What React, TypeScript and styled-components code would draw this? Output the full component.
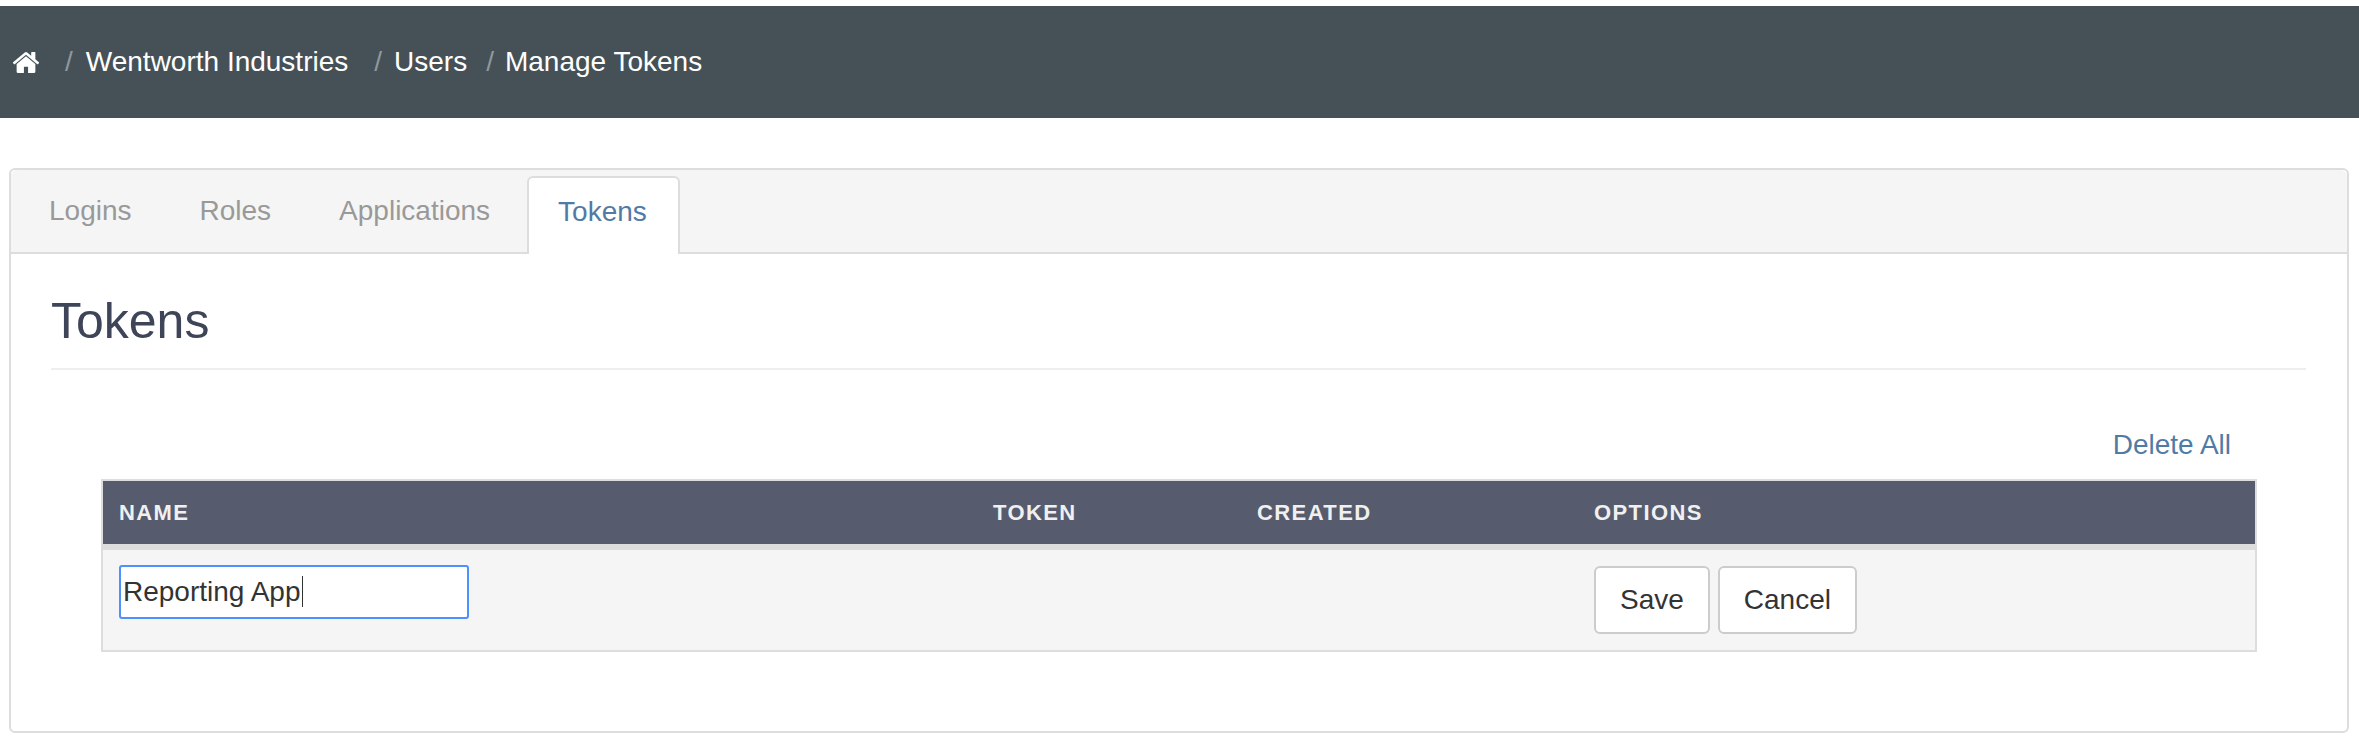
import React from 'react';
import styled, { createGlobalStyle } from 'styled-components';

const GlobalStyle = createGlobalStyle`
html, body {
  margin: 0;
  padding: 0;
  background: #fff;
  font-family: "Liberation Sans", Arial, sans-serif;
}
* { box-sizing: border-box; }
`;

const Page = styled.div`
  width: 2359px;
  height: 743px;
  padding-top: 6px;
  overflow: hidden;
`;

const Header = styled.nav`
  height: 112px;
  background: #455157;
  display: flex;
  align-items: center;
  padding-left: 13px;
  color: #fff;
  font-size: 28px;
`;

const Crumb = styled.span<{ $gap?: number }>`
  color: #fff;
  margin-right: ${(p) => p.$gap ?? 0}px;
`;

const Sep = styled.span<{ $gap: number }>`
  color: #8f989c;
  margin-right: ${(p) => p.$gap}px;
`;

const HomeIcon = styled.svg`
  width: 26px;
  height: 21px;
  fill: #fff;
  margin-right: 26px;
`;

const Card = styled.section`
  margin: 50px 10px 0 9px;
  height: 565px;
  border: 2px solid #ddd;
  border-radius: 6px;
`;

const TabBar = styled.ul`
  list-style: none;
  margin: 0;
  height: 84px;
  padding: 6px 0 0 4px;
  display: flex;
  background: #f5f5f5;
  border-bottom: 2px solid #ddd;
  border-radius: 6px 6px 0 0;
`;

const Tab = styled.li<{ $active?: boolean }>`
  height: 78px;
  padding: 0 34px 8px;
  display: flex;
  align-items: center;
  font-size: 28px;
  color: ${(p) => (p.$active ? '#4f7ba6' : '#999')};
  ${(p) =>
    p.$active &&
    `
    padding: 0 31px 8px 29px;
    margin-left: 3px;
    background: #fff;
    border: 2px solid #ddd;
    border-bottom: none;
    border-radius: 6px 6px 0 0;
  `}
`;

const Body = styled.div`
  padding: 0 41px 0 40px;
`;

const Title = styled.h2`
  margin: 0;
  height: 116px;
  padding-top: 39px;
  font-size: 50px;
  line-height: 56px;
  font-weight: 400;
  color: #3f4558;
  border-bottom: 2px solid #eee;
`;

const Actions = styled.div`
  height: 109px;
  padding: 59px 75px 0 0;
  display: flex;
  justify-content: flex-end;
`;

const LinkAction = styled.a`
  color: #4f7ba6;
  font-size: 28px;
  line-height: 32px;
`;

const Table = styled.div`
  margin: 0 49px 0 50px;
  border: 2px solid #ddd;
`;

const HeadRow = styled.div`
  display: grid;
  grid-template-columns: 874px 264px 337px 1fr;
  height: 63px;
  background: #565b6d;
  align-items: center;
  padding-left: 16px;
`;

const HeadCell = styled.div`
  color: #f0f0f0;
  font-size: 22px;
  font-weight: 700;
  letter-spacing: 1.4px;
`;

const BodyRow = styled.div`
  display: grid;
  grid-template-columns: 874px 264px 337px 1fr;
  height: 106px;
  background: #f5f5f5;
  border-top: 6px solid #ddd;
  padding: 15px 0 0 16px;
`;

const InputWrap = styled.div`
  position: relative;
  width: 350px;
  height: 54px;
`;

const NameInput = styled.input`
  width: 350px;
  height: 54px;
  border: 2px solid #4d90fe;
  border-radius: 3px;
  background: #fff;
  padding: 0 2px;
  font-family: inherit;
  font-size: 28px;
  color: #333;
  outline: none;
  caret-color: transparent;
`;

const Caret = styled.span`
  position: absolute;
  left: 183px;
  top: 11px;
  width: 1px;
  height: 31px;
  background: #333;
`;

const ButtonGroup = styled.div`
  display: flex;
  gap: 8px;
  margin-top: 1px;
`;

const Button = styled.button`
  height: 68px;
  padding: 0 24px;
  background: #fff;
  border: 2px solid #ccc;
  border-radius: 6px;
  font-family: inherit;
  font-size: 28px;
  color: #333;
`;

const App = () => (
  <Page>
    <GlobalStyle />
    <Header>
      <HomeIcon viewBox="32 256 1600 1280">
        <path d="M1408 992v480q0 26-19 45t-45 19h-384v-384h-256v384h-384q-26 0-45-19t-19-45v-480q0-1 .5-3t.5-3l575-474 575 474q1 2 1 6zm223-69l-62 74q-8 9-21 11h-3q-13 0-21-7l-692-577-692 577q-12 8-24 7-13-2-21-11l-62-74q-8-10-7-23.500t11-21.500l719-599q32-26 76-26t76 26l244 204v-195q0-14 9-23t23-9h192q14 0 23 9t9 23v408l219 182q10 8 11 21.500t-7 23.500z" />
      </HomeIcon>
      <Sep $gap={13}>/</Sep>
      <Crumb $gap={26}>Wentworth Industries</Crumb>
      <Sep $gap={12}>/</Sep>
      <Crumb $gap={19}>Users</Crumb>
      <Sep $gap={11}>/</Sep>
      <Crumb>Manage Tokens</Crumb>
    </Header>
    <Card>
      <TabBar>
        <Tab>Logins</Tab>
        <Tab>Roles</Tab>
        <Tab>Applications</Tab>
        <Tab $active>Tokens</Tab>
      </TabBar>
      <Body>
        <Title>Tokens</Title>
        <Actions>
          <LinkAction>Delete All</LinkAction>
        </Actions>
        <Table>
          <HeadRow>
            <HeadCell>NAME</HeadCell>
            <HeadCell>TOKEN</HeadCell>
            <HeadCell>CREATED</HeadCell>
            <HeadCell>OPTIONS</HeadCell>
          </HeadRow>
          <BodyRow>
            <InputWrap>
              <NameInput defaultValue="Reporting App" autoFocus />
              <Caret />
            </InputWrap>
            <div />
            <div />
            <ButtonGroup>
              <Button>Save</Button>
              <Button>Cancel</Button>
            </ButtonGroup>
          </BodyRow>
        </Table>
      </Body>
    </Card>
  </Page>
);

export default App;
